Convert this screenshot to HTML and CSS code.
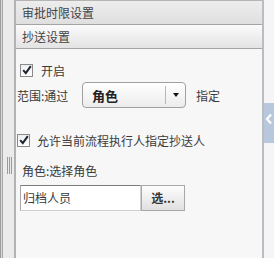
FILE: index.html
```html
<!DOCTYPE html>
<html lang="zh">
<head>
<meta charset="utf-8">
<link rel="stylesheet" href="styles.css">
</head>
<body>
<div class="app">
  <div class="gutter"><div class="grip"></div></div>
  <div class="panel">
    <div class="hdr hdr1">审批时限设置</div>
    <div class="hdr hdr2">抄送设置</div>
    <div class="body">
      <div class="row row-on">
        <span class="cb"><svg width="10" height="10" viewBox="0 0 10 10"><path d="M1.2 5.2 L3.8 8.2 L8.8 1.2" fill="none" stroke="#1c2433" stroke-width="2"/></svg></span>
        <span class="cb-text">开启</span>
      </div>
      <div class="row row-scope">
        <span class="scope-label">范围:通过</span>
        <div class="select"><span class="sel-text">角色</span><span class="sel-btn"><span class="tri"></span></span></div>
        <span class="assign">指定</span>
      </div>
      <div class="row row-allow">
        <span class="cb"><svg width="10" height="10" viewBox="0 0 10 10"><path d="M1.2 5.2 L3.8 8.2 L8.8 1.2" fill="none" stroke="#1c2433" stroke-width="2"/></svg></span>
        <span class="cb-text">允许当前流程执行人指定抄送人</span>
      </div>
      <div class="row row-role">角色:选择角色</div>
      <div class="row row-pick">
        <div class="input">归档人员</div>
        <div class="btn">选...</div>
      </div>
    </div>
  </div>
  <div class="side">
    <div class="tab"><svg width="8" height="12" viewBox="0 0 8 12"><path d="M6 1.5 L2 6 L6 10.5" fill="none" stroke="#ffffff" stroke-width="2.2"/></svg></div>
  </div>
</div>
</body>
</html>
```

FILE: styles.css
```css
html, body {
  margin: 0;
  padding: 0;
}
body {
  width: 274px;
  height: 258px;
  overflow: hidden;
  font-family: "Noto Sans CJK SC", "Liberation Sans", sans-serif;
  font-size: 12px;
  color: #3a3a3a;
  background: #f5f5f5;
}
.app {
  display: flex;
  height: 258px;
}
.gutter {
  width: 14px;
  flex: none;
  display: flex;
  flex-direction: column;
  background: linear-gradient(to right, #9c9c9c 0 1px, #d8d8d8 1px 2px, #a8a8a8 2px 3px, #ebebeb 3px);
}
.grip {
  margin-top: 157px;
  margin-left: 7px;
  width: 5px;
  height: 17px;
  background: linear-gradient(to right, #9a9a9a 0 1px, transparent 1px 2px, #9a9a9a 2px 3px, transparent 3px 4px, #9a9a9a 4px 5px);
}
.panel {
  width: 246px;
  flex: none;
  border-left: 2px solid #b2b2b2;
  border-right: 2px solid #b8bcc3;
  background: #f7f7f7;
  display: flex;
  flex-direction: column;
}
.hdr {
  height: 23px;
  line-height: 23px;
  padding-left: 6px;
  color: #444;
  border-bottom: 1px solid #a4a4a4;
}
.hdr1 {
  border-top: 1px solid #b4b4b4;
  background: linear-gradient(#ededed, #dfdfdf);
}
.hdr2 {
  background: linear-gradient(#fbfbfb, #e3e3e3);
}
.body {
  display: flex;
  flex-direction: column;
}
.row {
  display: flex;
  align-items: center;
}
.row-on {
  margin-top: 9px;
  height: 24px;
  padding-left: 4px;
}
.cb {
  width: 11px;
  height: 11px;
  border: 1px solid #8a8a8a;
  background: linear-gradient(#eeeeee, #ffffff);
  display: flex;
  align-items: center;
  justify-content: center;
  flex: none;
}
.row-on .cb-text {
  margin-left: 8px;
}
.row-scope {
  height: 26px;
  padding-left: 1px;
}
.scope-label {
  width: 65px;
  flex: none;
}
.select {
  width: 102px;
  height: 24px;
  border: 1px solid #a0a0a0;
  border-radius: 4px;
  background: linear-gradient(#ffffff, #ececec);
  display: flex;
  align-items: center;
}
.sel-text {
  flex: 1;
  padding-left: 9px;
  font-weight: bold;
  font-size: 13px;
  color: #222;
}
.sel-btn {
  width: 19px;
  height: 18px;
  border-left: 1px solid #b8b8b8;
  display: flex;
  align-items: center;
  justify-content: center;
}
.tri {
  width: 0;
  height: 0;
  border-left: 3.5px solid transparent;
  border-right: 3.5px solid transparent;
  border-top: 4px solid #111;
}
.assign {
  margin-left: 10px;
}
.row-allow {
  margin-top: 22px;
  height: 20px;
  padding-left: 1px;
}
.row-allow .cb-text {
  margin-left: 7px;
}
.row-role {
  margin-top: 10px;
  height: 20px;
  padding-left: 6px;
}
.row-pick {
  margin-top: 5px;
  padding-left: 4px;
  align-items: stretch;
}
.input {
  width: 117px;
  height: 24px;
  line-height: 24px;
  padding-left: 2px;
  background: #fff;
  border-top: 1px solid #7c7c7c;
  border-left: 1px solid #a8a8a8;
  border-right: 1px solid #d0d0d0;
  border-bottom: 1px solid #d0d0d0;
}
.btn {
  width: 42px;
  height: 24px;
  line-height: 24px;
  text-align: center;
  border: 1px solid #a8a8a8;
  background: linear-gradient(#fdfdfd, #e0e0e0);
  font-weight: bold;
  color: #333;
}
.side {
  flex: 1;
  display: flex;
  flex-direction: column;
  background: #f5f5f5;
}
.tab {
  margin-top: 103px;
  height: 40px;
  background: #b8c8dc;
  display: flex;
  justify-content: center;
  padding-top: 10px;
  box-sizing: border-box;
}
```
